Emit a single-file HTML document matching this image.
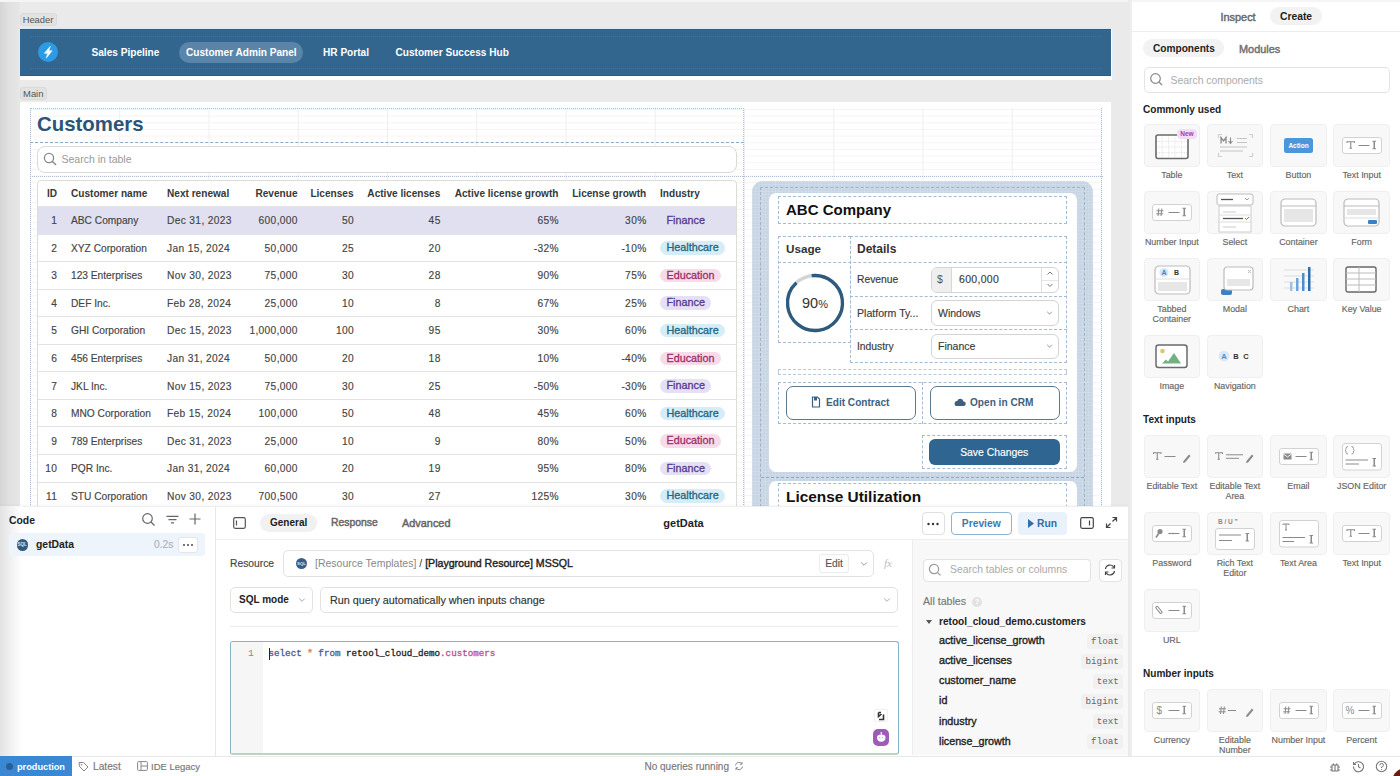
<!DOCTYPE html><html><head><meta charset="utf-8"><title>Retool</title><style>
*{margin:0;padding:0;box-sizing:border-box}
html,body{width:1400px;height:776px;overflow:hidden}
body{position:relative;background:#eaeaea;font-family:"Liberation Sans",sans-serif;color:#222;font-size:10px}
.a{position:absolute}
.b{font-weight:bold}
.t{white-space:nowrap}
.m{-webkit-text-stroke:0.15px currentColor}
</style></head><body>
<div class="a" style="left:0;top:0;width:1132px;height:507px;background:#eaeaea"></div>
<div class="a" style="left:0;top:0;width:20px;height:507px;background:linear-gradient(90deg,#d5d5d5 0,#e0e0e0 8px,#e6e6e6 19px,#e9e9e9 20px)"></div>
<div class="a" style="left:0;top:0;width:1400px;height:1.5px;background:#f5f5f5"></div>
<div class="a t" style="left:19.5px;top:12.5px;width:37px;height:13.5px;background:#e2e2e2;border:1px solid #dadada;border-radius:3px;color:#555;font-size:9.4px;line-height:12px;text-align:center">Header</div>
<div class="a" style="left:19px;top:27px;width:1094px;height:53px;background:#fff;border-top:2px solid #d8ebfa;border-left:1px solid #e0eefa;border-right:1px solid #e0eefa"></div>
<div class="a" style="left:20px;top:29px;width:1091px;height:47px;background:#32668e;border-top:1px solid #2b5c83;border-bottom:1.5px solid #2b5c83"></div>
<div class="a" style="left:30px;top:35.5px;width:1072px;height:33.5px;border-top:1px dotted rgba(120,170,210,0.2);border-bottom:1px dotted rgba(120,170,210,0.2)"></div>
<div class="a" style="left:38px;top:42px;width:20px;height:20px;border-radius:50%;background:#2b9be6"></div>
<svg class="a" style="left:38px;top:42px" width="20" height="20" viewBox="0 0 20 20"><path d="M12.3 4.2 L6.3 11.3 H9.6 L8.2 16.2 L14.2 8.8 H10.9 Z" fill="#f4fbff" stroke="#f4fbff" stroke-width="0.6" stroke-linejoin="round"/></svg>
<div class="a t b" style="left:91.5px;top:42px;height:21px;line-height:21px;color:#fff;font-size:10.1px">Sales Pipeline</div>
<div class="a" style="left:179px;top:42px;width:124px;height:21px;border-radius:11px;background:#5a85a8"></div>
<div class="a t b" style="left:186px;top:42px;height:21px;line-height:21px;color:#fff;font-size:10.1px">Customer Admin Panel</div>
<div class="a t b" style="left:323px;top:42px;height:21px;line-height:21px;color:#fff;font-size:10.1px">HR Portal</div>
<div class="a t b" style="left:395.5px;top:42px;height:21px;line-height:21px;color:#fff;font-size:10.1px">Customer Success Hub</div>
<div class="a t" style="left:19.5px;top:86.5px;width:27.5px;height:13.5px;background:#e2e2e2;border:1px solid #dadada;border-radius:3px;color:#555;font-size:9.4px;line-height:12px;text-align:center">Main</div>
<div class="a" style="left:20px;top:102px;width:1091px;height:405px;background:#fff"></div>
<div class="a" style="left:30px;top:108px;width:1072px;height:399px;background-image:linear-gradient(90deg,#efefef 1px,transparent 1px),linear-gradient(#f4f4f4 1px,transparent 1px);background-size:89.25px 100%,100% 6.66px;background-position:0 0,0 1px"></div>
<div class="a" style="left:30px;top:108px;width:714px;height:399px;border:1px dotted #a9c0d6"></div>
<div class="a" style="left:30px;top:142px;width:714px;height:0;border-top:1px dashed #8fa9c2"></div>
<div class="a" style="left:30px;top:176px;width:1073px;height:0;border-top:1px dotted #a9c0d6"></div>
<div class="a" style="left:1101px;top:108px;width:0;height:399px;border-left:1px dotted #a9c0d6"></div>
<div class="a t b" style="left:37px;top:111px;height:26px;line-height:26px;font-size:20.4px;color:#2c5477">Customers</div>
<div class="a" style="left:37px;top:146px;width:700px;height:27px;border:1px solid #d9d9d9;border-radius:8px;background:#fff"></div>
<svg class="a" style="left:43px;top:152px" width="14" height="14" viewBox="0 0 14 14"><circle cx="6" cy="6" r="4.6" fill="none" stroke="#888" stroke-width="1.3"/><path d="M9.4 9.4 L12.6 12.6" stroke="#888" stroke-width="1.4" stroke-linecap="round"/></svg>
<div class="a t" style="left:61.5px;top:150px;height:18px;line-height:18px;font-size:10.5px;color:#999">Search in table</div>
<div class="a" style="left:37px;top:180px;width:700px;height:340px;border:1px solid #dcdcdc;border-radius:4px;background:#fff;overflow:hidden"></div>
<div class="a t b" style="left:47px;top:185px;height:18px;line-height:18px;font-size:10.1px;color:#383838">ID</div>
<div class="a t b" style="left:71px;top:185px;height:18px;line-height:18px;font-size:10.1px;color:#383838">Customer name</div>
<div class="a t b" style="left:167px;top:185px;height:18px;line-height:18px;font-size:10.1px;color:#383838">Next renewal</div>
<div class="a t b" style="right:1102.5px;top:185px;height:18px;line-height:18px;font-size:10.1px;color:#383838">Revenue</div>
<div class="a t b" style="right:1046.4px;top:185px;height:18px;line-height:18px;font-size:10.1px;color:#383838">Licenses</div>
<div class="a t b" style="right:959.7px;top:185px;height:18px;line-height:18px;font-size:10.1px;color:#383838">Active licenses</div>
<div class="a t b" style="right:841.5px;top:185px;height:18px;line-height:18px;font-size:10.1px;color:#383838">Active license growth</div>
<div class="a t b" style="right:753.8px;top:185px;height:18px;line-height:18px;font-size:10.1px;color:#383838">License growth</div>
<div class="a t b" style="left:660px;top:185px;height:18px;line-height:18px;font-size:10.1px;color:#383838">Industry</div>
<div class="a" style="left:38px;top:206.0px;width:698px;height:27.55px;background:#e0e0f1"></div>
<div class="a" style="left:38px;top:206.0px;width:698px;height:1px;background:#e3e3e3"></div>
<div class="a t m" style="right:1342.65px;top:212.275px;height:18px;line-height:18px;font-size:10.2px;color:#444;letter-spacing:0.35px">1</div>
<div class="a t m" style="left:71px;top:212.275px;height:18px;line-height:18px;font-size:10.2px;color:#444">ABC Company</div>
<div class="a t m" style="left:167px;top:212.275px;height:18px;line-height:18px;font-size:10.2px;color:#444;letter-spacing:0.35px">Dec 31, 2023</div>
<div class="a t m" style="right:1102.15px;top:212.275px;height:18px;line-height:18px;font-size:10.2px;color:#444;letter-spacing:0.35px">600,000</div>
<div class="a t m" style="right:1046.0500000000002px;top:212.275px;height:18px;line-height:18px;font-size:10.2px;color:#444;letter-spacing:0.35px">50</div>
<div class="a t m" style="right:959.35px;top:212.275px;height:18px;line-height:18px;font-size:10.2px;color:#444;letter-spacing:0.35px">45</div>
<div class="a t m" style="right:841.15px;top:212.275px;height:18px;line-height:18px;font-size:10.2px;color:#444;letter-spacing:0.35px">65%</div>
<div class="a t m" style="right:753.4499999999999px;top:212.275px;height:18px;line-height:18px;font-size:10.2px;color:#444;letter-spacing:0.35px">30%</div>
<div class="a t m" style="left:660px;top:213.775px;width:51px;height:13.5px;border-radius:7px;background:transparent;color:#55398f;font-size:10.8px;line-height:13.5px;padding-left:6.5px;-webkit-text-stroke:0.3px #55398f">Finance</div>
<div class="a" style="left:38px;top:233.55px;width:698px;height:1px;background:#e3e3e3"></div>
<div class="a t m" style="right:1342.65px;top:239.82500000000002px;height:18px;line-height:18px;font-size:10.2px;color:#444;letter-spacing:0.35px">2</div>
<div class="a t m" style="left:71px;top:239.82500000000002px;height:18px;line-height:18px;font-size:10.2px;color:#444">XYZ Corporation</div>
<div class="a t m" style="left:167px;top:239.82500000000002px;height:18px;line-height:18px;font-size:10.2px;color:#444;letter-spacing:0.35px">Jan 15, 2024</div>
<div class="a t m" style="right:1102.15px;top:239.82500000000002px;height:18px;line-height:18px;font-size:10.2px;color:#444;letter-spacing:0.35px">50,000</div>
<div class="a t m" style="right:1046.0500000000002px;top:239.82500000000002px;height:18px;line-height:18px;font-size:10.2px;color:#444;letter-spacing:0.35px">25</div>
<div class="a t m" style="right:959.35px;top:239.82500000000002px;height:18px;line-height:18px;font-size:10.2px;color:#444;letter-spacing:0.35px">20</div>
<div class="a t m" style="right:841.15px;top:239.82500000000002px;height:18px;line-height:18px;font-size:10.2px;color:#444;letter-spacing:0.35px">-32%</div>
<div class="a t m" style="right:753.4499999999999px;top:239.82500000000002px;height:18px;line-height:18px;font-size:10.2px;color:#444;letter-spacing:0.35px">-10%</div>
<div class="a t m" style="left:660px;top:241.32500000000002px;width:65px;height:13.5px;border-radius:7px;background:#d6ecf6;color:#1d6684;font-size:10.8px;line-height:13.5px;padding-left:6.5px;-webkit-text-stroke:0.3px #1d6684">Healthcare</div>
<div class="a" style="left:38px;top:261.1px;width:698px;height:1px;background:#e3e3e3"></div>
<div class="a t m" style="right:1342.65px;top:267.375px;height:18px;line-height:18px;font-size:10.2px;color:#444;letter-spacing:0.35px">3</div>
<div class="a t m" style="left:71px;top:267.375px;height:18px;line-height:18px;font-size:10.2px;color:#444">123 Enterprises</div>
<div class="a t m" style="left:167px;top:267.375px;height:18px;line-height:18px;font-size:10.2px;color:#444;letter-spacing:0.35px">Nov 30, 2023</div>
<div class="a t m" style="right:1102.15px;top:267.375px;height:18px;line-height:18px;font-size:10.2px;color:#444;letter-spacing:0.35px">75,000</div>
<div class="a t m" style="right:1046.0500000000002px;top:267.375px;height:18px;line-height:18px;font-size:10.2px;color:#444;letter-spacing:0.35px">30</div>
<div class="a t m" style="right:959.35px;top:267.375px;height:18px;line-height:18px;font-size:10.2px;color:#444;letter-spacing:0.35px">28</div>
<div class="a t m" style="right:841.15px;top:267.375px;height:18px;line-height:18px;font-size:10.2px;color:#444;letter-spacing:0.35px">90%</div>
<div class="a t m" style="right:753.4499999999999px;top:267.375px;height:18px;line-height:18px;font-size:10.2px;color:#444;letter-spacing:0.35px">75%</div>
<div class="a t m" style="left:660px;top:268.875px;width:61px;height:13.5px;border-radius:7px;background:#f7dbe9;color:#9d2f67;font-size:10.8px;line-height:13.5px;padding-left:6.5px;-webkit-text-stroke:0.3px #9d2f67">Education</div>
<div class="a" style="left:38px;top:288.65px;width:698px;height:1px;background:#e3e3e3"></div>
<div class="a t m" style="right:1342.65px;top:294.92499999999995px;height:18px;line-height:18px;font-size:10.2px;color:#444;letter-spacing:0.35px">4</div>
<div class="a t m" style="left:71px;top:294.92499999999995px;height:18px;line-height:18px;font-size:10.2px;color:#444">DEF Inc.</div>
<div class="a t m" style="left:167px;top:294.92499999999995px;height:18px;line-height:18px;font-size:10.2px;color:#444;letter-spacing:0.35px">Feb 28, 2024</div>
<div class="a t m" style="right:1102.15px;top:294.92499999999995px;height:18px;line-height:18px;font-size:10.2px;color:#444;letter-spacing:0.35px">25,000</div>
<div class="a t m" style="right:1046.0500000000002px;top:294.92499999999995px;height:18px;line-height:18px;font-size:10.2px;color:#444;letter-spacing:0.35px">10</div>
<div class="a t m" style="right:959.35px;top:294.92499999999995px;height:18px;line-height:18px;font-size:10.2px;color:#444;letter-spacing:0.35px">8</div>
<div class="a t m" style="right:841.15px;top:294.92499999999995px;height:18px;line-height:18px;font-size:10.2px;color:#444;letter-spacing:0.35px">67%</div>
<div class="a t m" style="right:753.4499999999999px;top:294.92499999999995px;height:18px;line-height:18px;font-size:10.2px;color:#444;letter-spacing:0.35px">25%</div>
<div class="a t m" style="left:660px;top:296.42499999999995px;width:51px;height:13.5px;border-radius:7px;background:#e6e0f4;color:#55398f;font-size:10.8px;line-height:13.5px;padding-left:6.5px;-webkit-text-stroke:0.3px #55398f">Finance</div>
<div class="a" style="left:38px;top:316.2px;width:698px;height:1px;background:#e3e3e3"></div>
<div class="a t m" style="right:1342.65px;top:322.47499999999997px;height:18px;line-height:18px;font-size:10.2px;color:#444;letter-spacing:0.35px">5</div>
<div class="a t m" style="left:71px;top:322.47499999999997px;height:18px;line-height:18px;font-size:10.2px;color:#444">GHI Corporation</div>
<div class="a t m" style="left:167px;top:322.47499999999997px;height:18px;line-height:18px;font-size:10.2px;color:#444;letter-spacing:0.35px">Dec 15, 2023</div>
<div class="a t m" style="right:1102.15px;top:322.47499999999997px;height:18px;line-height:18px;font-size:10.2px;color:#444;letter-spacing:0.35px">1,000,000</div>
<div class="a t m" style="right:1046.0500000000002px;top:322.47499999999997px;height:18px;line-height:18px;font-size:10.2px;color:#444;letter-spacing:0.35px">100</div>
<div class="a t m" style="right:959.35px;top:322.47499999999997px;height:18px;line-height:18px;font-size:10.2px;color:#444;letter-spacing:0.35px">95</div>
<div class="a t m" style="right:841.15px;top:322.47499999999997px;height:18px;line-height:18px;font-size:10.2px;color:#444;letter-spacing:0.35px">30%</div>
<div class="a t m" style="right:753.4499999999999px;top:322.47499999999997px;height:18px;line-height:18px;font-size:10.2px;color:#444;letter-spacing:0.35px">60%</div>
<div class="a t m" style="left:660px;top:323.97499999999997px;width:65px;height:13.5px;border-radius:7px;background:#d6ecf6;color:#1d6684;font-size:10.8px;line-height:13.5px;padding-left:6.5px;-webkit-text-stroke:0.3px #1d6684">Healthcare</div>
<div class="a" style="left:38px;top:343.75px;width:698px;height:1px;background:#e3e3e3"></div>
<div class="a t m" style="right:1342.65px;top:350.025px;height:18px;line-height:18px;font-size:10.2px;color:#444;letter-spacing:0.35px">6</div>
<div class="a t m" style="left:71px;top:350.025px;height:18px;line-height:18px;font-size:10.2px;color:#444">456 Enterprises</div>
<div class="a t m" style="left:167px;top:350.025px;height:18px;line-height:18px;font-size:10.2px;color:#444;letter-spacing:0.35px">Jan 31, 2024</div>
<div class="a t m" style="right:1102.15px;top:350.025px;height:18px;line-height:18px;font-size:10.2px;color:#444;letter-spacing:0.35px">50,000</div>
<div class="a t m" style="right:1046.0500000000002px;top:350.025px;height:18px;line-height:18px;font-size:10.2px;color:#444;letter-spacing:0.35px">20</div>
<div class="a t m" style="right:959.35px;top:350.025px;height:18px;line-height:18px;font-size:10.2px;color:#444;letter-spacing:0.35px">18</div>
<div class="a t m" style="right:841.15px;top:350.025px;height:18px;line-height:18px;font-size:10.2px;color:#444;letter-spacing:0.35px">10%</div>
<div class="a t m" style="right:753.4499999999999px;top:350.025px;height:18px;line-height:18px;font-size:10.2px;color:#444;letter-spacing:0.35px">-40%</div>
<div class="a t m" style="left:660px;top:351.525px;width:61px;height:13.5px;border-radius:7px;background:#f7dbe9;color:#9d2f67;font-size:10.8px;line-height:13.5px;padding-left:6.5px;-webkit-text-stroke:0.3px #9d2f67">Education</div>
<div class="a" style="left:38px;top:371.3px;width:698px;height:1px;background:#e3e3e3"></div>
<div class="a t m" style="right:1342.65px;top:377.575px;height:18px;line-height:18px;font-size:10.2px;color:#444;letter-spacing:0.35px">7</div>
<div class="a t m" style="left:71px;top:377.575px;height:18px;line-height:18px;font-size:10.2px;color:#444">JKL Inc.</div>
<div class="a t m" style="left:167px;top:377.575px;height:18px;line-height:18px;font-size:10.2px;color:#444;letter-spacing:0.35px">Nov 15, 2023</div>
<div class="a t m" style="right:1102.15px;top:377.575px;height:18px;line-height:18px;font-size:10.2px;color:#444;letter-spacing:0.35px">75,000</div>
<div class="a t m" style="right:1046.0500000000002px;top:377.575px;height:18px;line-height:18px;font-size:10.2px;color:#444;letter-spacing:0.35px">30</div>
<div class="a t m" style="right:959.35px;top:377.575px;height:18px;line-height:18px;font-size:10.2px;color:#444;letter-spacing:0.35px">25</div>
<div class="a t m" style="right:841.15px;top:377.575px;height:18px;line-height:18px;font-size:10.2px;color:#444;letter-spacing:0.35px">-50%</div>
<div class="a t m" style="right:753.4499999999999px;top:377.575px;height:18px;line-height:18px;font-size:10.2px;color:#444;letter-spacing:0.35px">-30%</div>
<div class="a t m" style="left:660px;top:379.075px;width:51px;height:13.5px;border-radius:7px;background:#e6e0f4;color:#55398f;font-size:10.8px;line-height:13.5px;padding-left:6.5px;-webkit-text-stroke:0.3px #55398f">Finance</div>
<div class="a" style="left:38px;top:398.85px;width:698px;height:1px;background:#e3e3e3"></div>
<div class="a t m" style="right:1342.65px;top:405.125px;height:18px;line-height:18px;font-size:10.2px;color:#444;letter-spacing:0.35px">8</div>
<div class="a t m" style="left:71px;top:405.125px;height:18px;line-height:18px;font-size:10.2px;color:#444">MNO Corporation</div>
<div class="a t m" style="left:167px;top:405.125px;height:18px;line-height:18px;font-size:10.2px;color:#444;letter-spacing:0.35px">Feb 15, 2024</div>
<div class="a t m" style="right:1102.15px;top:405.125px;height:18px;line-height:18px;font-size:10.2px;color:#444;letter-spacing:0.35px">100,000</div>
<div class="a t m" style="right:1046.0500000000002px;top:405.125px;height:18px;line-height:18px;font-size:10.2px;color:#444;letter-spacing:0.35px">50</div>
<div class="a t m" style="right:959.35px;top:405.125px;height:18px;line-height:18px;font-size:10.2px;color:#444;letter-spacing:0.35px">48</div>
<div class="a t m" style="right:841.15px;top:405.125px;height:18px;line-height:18px;font-size:10.2px;color:#444;letter-spacing:0.35px">45%</div>
<div class="a t m" style="right:753.4499999999999px;top:405.125px;height:18px;line-height:18px;font-size:10.2px;color:#444;letter-spacing:0.35px">60%</div>
<div class="a t m" style="left:660px;top:406.625px;width:65px;height:13.5px;border-radius:7px;background:#d6ecf6;color:#1d6684;font-size:10.8px;line-height:13.5px;padding-left:6.5px;-webkit-text-stroke:0.3px #1d6684">Healthcare</div>
<div class="a" style="left:38px;top:426.4px;width:698px;height:1px;background:#e3e3e3"></div>
<div class="a t m" style="right:1342.65px;top:432.67499999999995px;height:18px;line-height:18px;font-size:10.2px;color:#444;letter-spacing:0.35px">9</div>
<div class="a t m" style="left:71px;top:432.67499999999995px;height:18px;line-height:18px;font-size:10.2px;color:#444">789 Enterprises</div>
<div class="a t m" style="left:167px;top:432.67499999999995px;height:18px;line-height:18px;font-size:10.2px;color:#444;letter-spacing:0.35px">Dec 31, 2023</div>
<div class="a t m" style="right:1102.15px;top:432.67499999999995px;height:18px;line-height:18px;font-size:10.2px;color:#444;letter-spacing:0.35px">25,000</div>
<div class="a t m" style="right:1046.0500000000002px;top:432.67499999999995px;height:18px;line-height:18px;font-size:10.2px;color:#444;letter-spacing:0.35px">10</div>
<div class="a t m" style="right:959.35px;top:432.67499999999995px;height:18px;line-height:18px;font-size:10.2px;color:#444;letter-spacing:0.35px">9</div>
<div class="a t m" style="right:841.15px;top:432.67499999999995px;height:18px;line-height:18px;font-size:10.2px;color:#444;letter-spacing:0.35px">80%</div>
<div class="a t m" style="right:753.4499999999999px;top:432.67499999999995px;height:18px;line-height:18px;font-size:10.2px;color:#444;letter-spacing:0.35px">50%</div>
<div class="a t m" style="left:660px;top:434.17499999999995px;width:61px;height:13.5px;border-radius:7px;background:#f7dbe9;color:#9d2f67;font-size:10.8px;line-height:13.5px;padding-left:6.5px;-webkit-text-stroke:0.3px #9d2f67">Education</div>
<div class="a" style="left:38px;top:453.95000000000005px;width:698px;height:1px;background:#e3e3e3"></div>
<div class="a t m" style="right:1342.65px;top:460.225px;height:18px;line-height:18px;font-size:10.2px;color:#444;letter-spacing:0.35px">10</div>
<div class="a t m" style="left:71px;top:460.225px;height:18px;line-height:18px;font-size:10.2px;color:#444">PQR Inc.</div>
<div class="a t m" style="left:167px;top:460.225px;height:18px;line-height:18px;font-size:10.2px;color:#444;letter-spacing:0.35px">Jan 31, 2024</div>
<div class="a t m" style="right:1102.15px;top:460.225px;height:18px;line-height:18px;font-size:10.2px;color:#444;letter-spacing:0.35px">60,000</div>
<div class="a t m" style="right:1046.0500000000002px;top:460.225px;height:18px;line-height:18px;font-size:10.2px;color:#444;letter-spacing:0.35px">20</div>
<div class="a t m" style="right:959.35px;top:460.225px;height:18px;line-height:18px;font-size:10.2px;color:#444;letter-spacing:0.35px">19</div>
<div class="a t m" style="right:841.15px;top:460.225px;height:18px;line-height:18px;font-size:10.2px;color:#444;letter-spacing:0.35px">95%</div>
<div class="a t m" style="right:753.4499999999999px;top:460.225px;height:18px;line-height:18px;font-size:10.2px;color:#444;letter-spacing:0.35px">80%</div>
<div class="a t m" style="left:660px;top:461.725px;width:51px;height:13.5px;border-radius:7px;background:#e6e0f4;color:#55398f;font-size:10.8px;line-height:13.5px;padding-left:6.5px;-webkit-text-stroke:0.3px #55398f">Finance</div>
<div class="a" style="left:38px;top:481.5px;width:698px;height:1px;background:#e3e3e3"></div>
<div class="a t m" style="right:1342.65px;top:487.775px;height:18px;line-height:18px;font-size:10.2px;color:#444;letter-spacing:0.35px">11</div>
<div class="a t m" style="left:71px;top:487.775px;height:18px;line-height:18px;font-size:10.2px;color:#444">STU Corporation</div>
<div class="a t m" style="left:167px;top:487.775px;height:18px;line-height:18px;font-size:10.2px;color:#444;letter-spacing:0.35px">Nov 30, 2023</div>
<div class="a t m" style="right:1102.15px;top:487.775px;height:18px;line-height:18px;font-size:10.2px;color:#444;letter-spacing:0.35px">700,500</div>
<div class="a t m" style="right:1046.0500000000002px;top:487.775px;height:18px;line-height:18px;font-size:10.2px;color:#444;letter-spacing:0.35px">30</div>
<div class="a t m" style="right:959.35px;top:487.775px;height:18px;line-height:18px;font-size:10.2px;color:#444;letter-spacing:0.35px">27</div>
<div class="a t m" style="right:841.15px;top:487.775px;height:18px;line-height:18px;font-size:10.2px;color:#444;letter-spacing:0.35px">125%</div>
<div class="a t m" style="right:753.4499999999999px;top:487.775px;height:18px;line-height:18px;font-size:10.2px;color:#444;letter-spacing:0.35px">30%</div>
<div class="a t m" style="left:660px;top:489.275px;width:65px;height:13.5px;border-radius:7px;background:#d6ecf6;color:#1d6684;font-size:10.8px;line-height:13.5px;padding-left:6.5px;-webkit-text-stroke:0.3px #1d6684">Healthcare</div>
<div class="a" style="left:752px;top:181px;width:341px;height:340px;border-radius:11px;background:#c6d4e3"></div>
<div class="a" style="left:752px;top:181px;width:341px;height:340px;border-radius:11px;background-image:linear-gradient(90deg,rgba(255,255,255,0.18) 1px,transparent 1px),linear-gradient(rgba(255,255,255,0.18) 1px,transparent 1px);background-size:3.3px 100%,100% 3.3px;pointer-events:none"></div>
<div class="a" style="left:760px;top:187px;width:325px;height:330px;border:1px dashed #9db3c9"></div>
<div class="a" style="left:768.5px;top:193px;width:308.5px;height:279px;border-radius:7px;background:#fff"></div>
<div class="a" style="left:768.5px;top:481px;width:308.5px;height:60px;border-radius:7px;background:#fff"></div>
<div class="a" style="left:761px;top:476.5px;width:323px;border-top:1px dashed #8ea8c2"></div>
<div class="a" style="left:778px;top:196px;width:289px;height:28px;border:1px dashed #a6bbd0"></div>
<div class="a t b" style="left:786px;top:200px;height:20px;line-height:20px;font-size:15px;color:#111">ABC Company</div>
<div class="a" style="left:778px;top:235.5px;width:73px;height:107px;border:1px dashed #a6bbd0"></div>
<div class="a" style="left:850px;top:235.5px;width:217px;height:127px;border:1px dashed #a6bbd0"></div>
<div class="a" style="left:778px;top:262px;width:289px;border-top:1px dashed #a6bbd0"></div>
<div class="a" style="left:850px;top:296px;width:217px;border-top:1px dashed #a6bbd0"></div>
<div class="a" style="left:850px;top:329px;width:217px;border-top:1px dashed #a6bbd0"></div>
<div class="a t b" style="left:786px;top:240px;height:18px;line-height:18px;font-size:11.7px;color:#333">Usage</div>
<div class="a t b" style="left:857px;top:240px;height:18px;line-height:18px;font-size:12px;color:#333">Details</div>
<svg class="a" style="left:784px;top:272px" width="62" height="62" viewBox="0 0 62 62"><circle cx="31" cy="31" r="27.5" fill="none" stroke="#d4d4d4" stroke-width="3.3"/><circle cx="31" cy="31" r="27.5" fill="none" stroke="#2d5b80" stroke-width="3.3" stroke-dasharray="155.5 200" transform="rotate(-97 31 31)"/></svg>
<div class="a t" style="left:799px;top:294px;width:32px;height:18px;line-height:18px;font-size:14.5px;color:#333;text-align:center">90<span style="font-size:11px">%</span></div>
<div class="a t m" style="left:857px;top:271px;height:18px;line-height:18px;font-size:10.3px;color:#3a3a3a">Revenue</div>
<div class="a t m" style="left:857px;top:304px;height:18px;line-height:18px;font-size:10.6px;color:#3a3a3a">Platform Ty...</div>
<div class="a t m" style="left:857px;top:338px;height:18px;line-height:18px;font-size:10.3px;color:#3a3a3a">Industry</div>
<div class="a" style="left:931px;top:266.5px;width:128px;height:26px;border:1px solid #d4d4d4;border-radius:6px;background:#fff;overflow:hidden"><div class="a" style="left:0;top:0;width:20px;height:24px;background:#efefef;border-right:1px solid #d8d8d8"></div><div class="a" style="left:109px;top:0;width:1px;height:24px;background:#e0e0e0"></div><div class="a" style="left:110px;top:12px;width:18px;height:1px;background:#e6e6e6"></div></div>
<div class="a t" style="left:937px;top:270px;height:18px;line-height:18px;font-size:10.5px;color:#555">$</div>
<div class="a t m" style="left:959px;top:270px;height:18px;line-height:18px;font-size:10.5px;color:#3a3a3a;letter-spacing:0.3px">600,000</div>
<svg class="a" style="left:1045px;top:268px" width="10" height="22" viewBox="0 0 10 22"><path d="M2.5 6.5 L5 4 L7.5 6.5" fill="none" stroke="#777" stroke-width="1"/><path d="M2.5 16 L5 18.5 L7.5 16" fill="none" stroke="#777" stroke-width="1"/></svg>
<div class="a" style="left:931px;top:300px;width:128px;height:25.5px;border:1px solid #d4d4d4;border-radius:6px;background:#fff"></div>
<div class="a t m" style="left:938px;top:303.75px;height:18px;line-height:18px;font-size:10.5px;color:#3a3a3a">Windows</div>
<svg class="a" style="left:1046px;top:309.75px" width="7" height="6" viewBox="0 0 7 6"><path d="M1.2 1.8 L3.5 4.1 L5.8 1.8" fill="none" stroke="#888" stroke-width="0.9"/></svg>
<div class="a" style="left:931px;top:333.5px;width:128px;height:25.5px;border:1px solid #d4d4d4;border-radius:6px;background:#fff"></div>
<div class="a t m" style="left:938px;top:337.25px;height:18px;line-height:18px;font-size:10.5px;color:#3a3a3a">Finance</div>
<svg class="a" style="left:1046px;top:343.25px" width="7" height="6" viewBox="0 0 7 6"><path d="M1.2 1.8 L3.5 4.1 L5.8 1.8" fill="none" stroke="#888" stroke-width="0.9"/></svg>
<div class="a" style="left:778px;top:369px;width:289px;height:6px;border:1px dashed #b9c9d9"></div>
<div class="a" style="left:778px;top:382px;width:289px;height:42px;border:1px dashed #a6bbd0"></div>
<div class="a" style="left:922px;top:382px;height:42px;border-left:1px dashed #a6bbd0"></div>
<div class="a" style="left:922px;top:435px;width:145px;height:34px;border:1px dashed #a6bbd0"></div>
<div class="a" style="left:785.5px;top:386px;width:130.5px;height:33.5px;border:1.5px solid #5c7890;border-radius:7px;background:#fff"></div>
<div class="a" style="left:929.5px;top:386px;width:130px;height:33.5px;border:1.5px solid #5c7890;border-radius:7px;background:#fff"></div>
<svg class="a" style="left:811px;top:396px" width="10" height="12" viewBox="0 0 10 12"><path d="M1.5 1 H6.5 L8.5 3 V11 H1.5 Z" fill="none" stroke="#3f607d" stroke-width="1.2"/><path d="M3 1 V4.5 H6 V1" fill="#3f607d"/></svg>
<div class="a t b" style="left:826px;top:394px;height:18px;line-height:18px;font-size:10.1px;color:#3f607d">Edit Contract</div>
<svg class="a" style="left:954px;top:397px" width="12" height="10" viewBox="0 0 12 10"><path d="M3 9 H9.5 A2.3 2.3 0 0 0 9.5 4.4 A3.3 3.3 0 0 0 3.2 4 A2.5 2.5 0 0 0 3 9 Z" fill="#3f607d"/></svg>
<div class="a t b" style="left:970px;top:394px;height:18px;line-height:18px;font-size:10.1px;color:#3f607d">Open in CRM</div>
<div class="a" style="left:929px;top:439px;width:130.5px;height:26px;border-radius:6px;background:#2f6591"></div>
<div class="a t m" style="left:929px;top:444px;width:130.5px;height:18px;line-height:18px;font-size:10.4px;color:#fff;text-align:center">Save Changes</div>
<div class="a" style="left:778px;top:483px;width:289px;height:30px;border:1px dashed #a6bbd0"></div>
<div class="a t b" style="left:786px;top:487px;height:20px;line-height:20px;font-size:15.4px;color:#111">License Utilization</div>
<div class="a" style="left:0;top:505.5px;width:1132px;height:251px;background:#fff;border-top:1px solid #eeeeee;box-shadow:0 -1px 2px rgba(0,0,0,0.04)"></div>
<div class="a" style="left:0;top:506px;width:22px;height:250px;background:linear-gradient(90deg,#e3e3e3,#fff)"></div>
<div class="a" style="left:215px;top:507px;width:1px;height:249px;background:#e8e8e8"></div>
<div class="a t b" style="left:9px;top:511.5px;height:18px;line-height:18px;font-size:10.4px;color:#222">Code</div>
<svg class="a" style="left:141px;top:512px" width="15" height="15" viewBox="0 0 15 15"><circle cx="6.5" cy="6.5" r="4.8" fill="none" stroke="#666" stroke-width="1.2"/><path d="M10 10 L13.5 13.5" stroke="#666" stroke-width="1.3"/></svg>
<svg class="a" style="left:165px;top:513px" width="15" height="13" viewBox="0 0 15 13"><path d="M1.5 3.3 H13.5 M3.5 6.6 H11.5 M6 9.8 H9" stroke="#666" stroke-width="1.2"/></svg>
<svg class="a" style="left:188px;top:512px" width="14" height="14" viewBox="0 0 14 14"><path d="M7 1.5 V12.5 M1.5 7 H12.5" stroke="#666" stroke-width="1.2"/></svg>
<div class="a" style="left:9px;top:533px;width:196px;height:23px;background:#edf4fb;border-radius:3px"></div>
<div class="a" style="left:16.5px;top:539px;width:11.5px;height:11.5px;border-radius:50%;background:#34597a"></div><div class="a t" style="left:16.5px;top:539px;width:11.5px;height:11.5px;line-height:11.5px;font-size:4.5px;color:#dfe8f0;text-align:center;font-weight:bold">SQL</div>
<div class="a t b" style="left:36px;top:536px;height:18px;line-height:18px;font-size:10.4px;color:#222">getData</div>
<div class="a t m" style="left:154px;top:536px;height:18px;line-height:18px;font-size:10.2px;color:#aab2ba">0.2s</div>
<div class="a" style="left:178px;top:537px;width:20px;height:16px;background:#fff;border:1px solid #e6e6e6;border-radius:3px"></div>
<svg class="a" style="left:181px;top:543px" width="14" height="4" viewBox="0 0 14 4"><circle cx="3" cy="2" r="1.1" fill="#555"/><circle cx="7" cy="2" r="1.1" fill="#555"/><circle cx="11" cy="2" r="1.1" fill="#555"/></svg>
<div class="a" style="left:216px;top:539px;width:916px;height:1px;background:#eeeeee"></div>
<svg class="a" style="left:233px;top:517px" width="13" height="12" viewBox="0 0 13 12"><rect x="0.7" y="0.7" width="11.6" height="10.6" rx="1.5" fill="none" stroke="#555" stroke-width="1.2"/><path d="M3.5 3.5 V8.5" stroke="#555" stroke-width="1.2"/></svg>
<div class="a" style="left:260px;top:514px;width:57px;height:18px;border-radius:9px;background:#f1f1f1"></div>
<div class="a t b" style="left:270px;top:514px;height:18px;line-height:18px;font-size:10px;color:#222">General</div>
<div class="a t m" style="left:331px;top:514px;height:18px;line-height:18px;font-size:10.4px;color:#666;-webkit-text-stroke:0.45px #666">Response</div>
<div class="a t m" style="left:402px;top:514px;height:18px;line-height:18px;font-size:10.9px;color:#666;-webkit-text-stroke:0.45px #666">Advanced</div>
<div class="a t b" style="left:616px;top:514px;width:135px;height:18px;line-height:18px;font-size:11px;color:#222;text-align:center">getData</div>
<div class="a" style="left:921.5px;top:512px;width:23px;height:23px;border:1px solid #e0e0e0;border-radius:4px;background:#fff"></div>
<svg class="a" style="left:926px;top:522px" width="14" height="4" viewBox="0 0 14 4"><circle cx="2.5" cy="2" r="1.2" fill="#333"/><circle cx="7" cy="2" r="1.2" fill="#333"/><circle cx="11.5" cy="2" r="1.2" fill="#333"/></svg>
<div class="a" style="left:951px;top:512px;width:60.5px;height:23px;border:1px solid #8fb4d2;border-radius:4px;background:#fff"></div>
<div class="a t b" style="left:951px;top:514.5px;width:60.5px;height:18px;line-height:18px;font-size:10.3px;color:#3b7ab0;text-align:center">Preview</div>
<div class="a" style="left:1018px;top:512px;width:48.5px;height:23px;border-radius:4px;background:#e9f2fa"></div>
<svg class="a" style="left:1027px;top:518px" width="8" height="11" viewBox="0 0 8 11"><path d="M1 1 L7 5.5 L1 10 Z" fill="#2f6ea8"/></svg>
<div class="a t b" style="left:1037px;top:514.5px;height:18px;line-height:18px;font-size:10.3px;color:#2f6ea8">Run</div>
<svg class="a" style="left:1080px;top:517px" width="14" height="12" viewBox="0 0 14 12"><rect x="0.7" y="0.7" width="12.6" height="10.6" rx="1.5" fill="none" stroke="#444" stroke-width="1.2"/><path d="M9.5 3.5 V8.5" stroke="#444" stroke-width="1.2"/></svg>
<svg class="a" style="left:1105px;top:516px" width="13" height="13" viewBox="0 0 13 13"><path d="M7.5 1.5 H11.5 V5.5 M11.5 1.5 L7.5 5.5 M5.5 11.5 H1.5 V7.5 M1.5 11.5 L5.5 7.5" fill="none" stroke="#444" stroke-width="1.2"/></svg>
<div class="a t m" style="left:230px;top:555px;height:18px;line-height:18px;font-size:10.3px;color:#444">Resource</div>
<div class="a" style="left:283px;top:550px;width:591px;height:26.5px;border:1px solid #e2e2e2;border-radius:5px;background:#fff"></div>
<div class="a" style="left:296px;top:558px;width:11px;height:11px;border-radius:50%;background:#36608a"></div><div class="a t" style="left:296px;top:558px;width:11px;height:11px;line-height:11px;font-size:4.3px;color:#dfe8f0;text-align:center;font-weight:bold">SQL</div>
<div class="a t" style="left:315px;top:554px;height:18px;line-height:18px;font-size:10.5px;color:#888">[Resource Templates] <span style="color:#333">/</span> <span class="m" style="color:#222;font-size:10.6px;-webkit-text-stroke:0.4px #222">[Playground Resource] MSSQL</span></div>
<div class="a" style="left:819px;top:554px;width:30px;height:19px;border:1px solid #ececec;border-radius:3px;background:#fff"></div>
<div class="a t m" style="left:819px;top:554.5px;width:30px;height:18px;line-height:18px;font-size:10.3px;color:#555;text-align:center">Edit</div>
<svg class="a" style="left:860px;top:561px" width="8" height="6" viewBox="0 0 8 6"><path d="M1.2 1.5 L4 4.3 L6.8 1.5" fill="none" stroke="#999" stroke-width="1"/></svg>
<div class="a t" style="left:884px;top:554px;height:18px;line-height:18px;font-size:11px;color:#bbb;font-family:'Liberation Serif',serif;font-style:italic">fx</div>
<div class="a" style="left:230px;top:587px;width:83px;height:26px;border:1px solid #e2e2e2;border-radius:5px;background:#fff"></div>
<div class="a t b" style="left:239px;top:591px;height:18px;line-height:18px;font-size:10px;color:#222">SQL mode</div>
<svg class="a" style="left:298px;top:597px" width="8" height="6" viewBox="0 0 8 6"><path d="M1.2 1.5 L4 4.3 L6.8 1.5" fill="none" stroke="#aaa" stroke-width="1"/></svg>
<div class="a" style="left:320px;top:587px;width:578px;height:26px;border:1px solid #e2e2e2;border-radius:5px;background:#fff"></div>
<div class="a t m" style="left:330px;top:591px;height:18px;line-height:18px;font-size:10.8px;color:#333">Run query automatically when inputs change</div>
<svg class="a" style="left:883px;top:597px" width="8" height="6" viewBox="0 0 8 6"><path d="M1.2 1.5 L4 4.3 L6.8 1.5" fill="none" stroke="#aaa" stroke-width="1"/></svg>
<div class="a" style="left:230px;top:625.5px;width:668px;height:1px;background:#ececec"></div>
<div class="a" style="left:229.5px;top:640.5px;width:669px;height:114px;border:1px solid #86b3c8;border-bottom:2px solid #b8d4c4;border-radius:3px;background:#fff;overflow:hidden"><div class="a" style="left:0;top:0;width:32px;height:114px;background:#f6f6f6"></div></div>
<div class="a t" style="left:248px;top:645px;height:18px;line-height:18px;font-size:9.5px;color:#888;font-family:'Liberation Mono',monospace">1</div>
<div class="a t" style="left:268.5px;top:645px;height:18px;line-height:18px;font-size:9.22px;font-family:'Liberation Mono',monospace;color:#222;-webkit-text-stroke:0.3px currentColor"><span style="color:#4b5a99">select</span> <span style="color:#e8875a;font-weight:bold">*</span> <span style="color:#4b5a99">from</span> retool_cloud_demo<span style="color:#c24c8b">.customers</span></div>
<div class="a" style="left:268.5px;top:648px;width:1px;height:12px;background:#222"></div>
<div class="a" style="left:874px;top:709px;width:14px;height:13px;background:#fff;border:1px solid #f0f0f0;border-radius:2px"></div><svg class="a" style="left:876px;top:711px" width="10" height="10" viewBox="0 0 10 10"><path d="M2.5 1.5 H5 M2.5 1.5 V5.5 L5.5 3 M7.5 3.5 V8.5 H3" fill="none" stroke="#333" stroke-width="1.6"/></svg>
<div class="a" style="left:872.5px;top:729px;width:16.5px;height:16.5px;border-radius:5px;background:#9c5cb8"></div>
<svg class="a" style="left:872.5px;top:729px" width="16.5" height="16.5" viewBox="0 0 16.5 16.5"><path d="M8.25 3 V5.5" stroke="#fff" stroke-width="1.2"/><path d="M4 8.5 Q4 5.5 8.25 5.5 Q12.5 5.5 12.5 8.5 Q12.5 12.5 8.25 12.8 Q4 12.5 4 8.5 Z" fill="#fff"/><circle cx="6.8" cy="8.8" r="0.7" fill="#c9a3d9"/><circle cx="9.7" cy="8.8" r="0.7" fill="#c9a3d9"/></svg>
<div class="a" style="left:912px;top:540px;width:220px;height:215px;background:#f8f8f8;border-left:1px solid #ececec"></div>
<div class="a" style="left:922.5px;top:558.5px;width:168px;height:23px;border:1px solid #e2e2e2;border-radius:4px;background:#fff"></div>
<svg class="a" style="left:928px;top:563px" width="14" height="14" viewBox="0 0 14 14"><circle cx="6" cy="6" r="4.6" fill="none" stroke="#999" stroke-width="1.2"/><path d="M9.4 9.4 L12.4 12.4" stroke="#999" stroke-width="1.3"/></svg>
<div class="a t" style="left:950px;top:561px;height:18px;line-height:18px;font-size:10.4px;color:#aaa">Search tables or columns</div>
<div class="a" style="left:1099px;top:558.5px;width:23px;height:23px;border:1px solid #e2e2e2;border-radius:4px;background:#fff"></div>
<svg class="a" style="left:1103px;top:563px" width="14" height="14" viewBox="0 0 14 14"><path d="M2.5 6 A4.5 4.5 0 0 1 11 4.5 M11.5 8 A4.5 4.5 0 0 1 3 9.5" fill="none" stroke="#444" stroke-width="1.2"/><path d="M11.5 2 V5 H8.5 M2.5 12 V9 H5.5" fill="none" stroke="#444" stroke-width="1.2"/></svg>
<div class="a t m" style="left:923px;top:592px;height:18px;line-height:18px;font-size:10.6px;color:#777">All tables</div>
<div class="a" style="left:972px;top:596.5px;width:10px;height:10px;border-radius:50%;background:#e2e2e2;color:#fff;font-size:7.5px;line-height:10px;text-align:center;font-weight:bold">?</div>
<svg class="a" style="left:925px;top:619px" width="8" height="6" viewBox="0 0 8 6"><path d="M1 1 H7 L4 5 Z" fill="#555"/></svg>
<div class="a t b" style="left:939px;top:613px;height:18px;line-height:18px;font-size:10.1px;color:#222">retool_cloud_demo.customers</div>
<div class="a t m" style="left:939px;top:631.1px;height:18px;line-height:18px;font-size:10.75px;color:#222;-webkit-text-stroke:0.35px #222">active_license_growth</div>
<div class="a t" style="left:1087.0px;top:633.6px;width:36.0px;height:15px;line-height:15px;font-size:9.3px;color:#666;font-family:'Liberation Mono',monospace;background:#f1f1f1;border-radius:3px;text-align:center">float</div>
<div class="a t m" style="left:939px;top:651.2px;height:18px;line-height:18px;font-size:10.75px;color:#222;-webkit-text-stroke:0.35px #222">active_licenses</div>
<div class="a t" style="left:1081.4px;top:653.7px;width:41.599999999999994px;height:15px;line-height:15px;font-size:9.3px;color:#666;font-family:'Liberation Mono',monospace;background:#f1f1f1;border-radius:3px;text-align:center">bigint</div>
<div class="a t m" style="left:939px;top:671.3000000000001px;height:18px;line-height:18px;font-size:10.75px;color:#222;-webkit-text-stroke:0.35px #222">customer_name</div>
<div class="a t" style="left:1092.6px;top:673.8000000000001px;width:30.4px;height:15px;line-height:15px;font-size:9.3px;color:#666;font-family:'Liberation Mono',monospace;background:#f1f1f1;border-radius:3px;text-align:center">text</div>
<div class="a t m" style="left:939px;top:691.4px;height:18px;line-height:18px;font-size:10.75px;color:#222;-webkit-text-stroke:0.35px #222">id</div>
<div class="a t" style="left:1081.4px;top:693.9px;width:41.599999999999994px;height:15px;line-height:15px;font-size:9.3px;color:#666;font-family:'Liberation Mono',monospace;background:#f1f1f1;border-radius:3px;text-align:center">bigint</div>
<div class="a t m" style="left:939px;top:711.5px;height:18px;line-height:18px;font-size:10.75px;color:#222;-webkit-text-stroke:0.35px #222">industry</div>
<div class="a t" style="left:1092.6px;top:714.0px;width:30.4px;height:15px;line-height:15px;font-size:9.3px;color:#666;font-family:'Liberation Mono',monospace;background:#f1f1f1;border-radius:3px;text-align:center">text</div>
<div class="a t m" style="left:939px;top:731.6px;height:18px;line-height:18px;font-size:10.75px;color:#222;-webkit-text-stroke:0.35px #222">license_growth</div>
<div class="a t" style="left:1087.0px;top:734.1px;width:36.0px;height:15px;line-height:15px;font-size:9.3px;color:#666;font-family:'Liberation Mono',monospace;background:#f1f1f1;border-radius:3px;text-align:center">float</div>
<div class="a" style="left:1128px;top:0;width:4px;height:756px;background:linear-gradient(90deg,#e9e9e9,#efefef)"></div>
<div class="a" style="left:1132px;top:1.5px;width:268px;height:754.5px;background:#fff"></div>
<div class="a" style="left:1132px;top:31px;width:268px;height:1px;background:#ececec"></div>
<div class="a t m" style="left:1220.5px;top:7.5px;height:18px;line-height:18px;font-size:10.9px;color:#6a6a6a;-webkit-text-stroke:0.45px #6a6a6a">Inspect</div>
<div class="a" style="left:1270px;top:6.5px;width:52px;height:18.5px;border-radius:9px;background:#f2f2f2"></div>
<div class="a t b" style="left:1280px;top:7.5px;height:18px;line-height:18px;font-size:10.3px;color:#222">Create</div>
<div class="a" style="left:1143px;top:38.5px;width:81px;height:18px;border-radius:9px;background:#f2f2f2"></div>
<div class="a t b" style="left:1153px;top:39.5px;height:18px;line-height:18px;font-size:10.15px;color:#222">Components</div>
<div class="a t m" style="left:1239px;top:39.5px;height:18px;line-height:18px;font-size:10.9px;color:#707070;-webkit-text-stroke:0.45px #707070">Modules</div>
<div class="a" style="left:1143.5px;top:67px;width:246px;height:26px;border:1px solid #e4e4e4;border-radius:5px;background:#fff"></div>
<svg class="a" style="left:1149px;top:72px" width="15" height="15" viewBox="0 0 15 15"><circle cx="6.5" cy="6.5" r="4.8" fill="none" stroke="#888" stroke-width="1.2"/><path d="M10 10 L13 13" stroke="#888" stroke-width="1.3"/></svg>
<div class="a t" style="left:1170.5px;top:72px;height:18px;line-height:18px;font-size:10.4px;color:#aaa">Search components</div>
<div class="a t b" style="left:1143px;top:100.8px;height:18px;line-height:18px;font-size:10.05px;color:#222">Commonly used</div>
<div class="a" style="left:1143.6px;top:124px;width:56.5px;height:43px;border-radius:4px;background:#f8f8f8;border:1px solid #efefef"></div>
<svg class="a" style="left:calc(1143.6px + 11px);top:calc(124px + 10px)" width="34" height="26" viewBox="0 0 34 26"><rect x="1" y="1" width="32" height="23.5" rx="2" fill="#fff"/><path d="M1 7.5 H33 M1 13 H33 M1 18.5 H33 M7 1 V24.5 M13.5 1 V24.5 M20 1 V24.5 M26.5 1 V24.5" stroke="#e0e0e0" stroke-width="0.8" stroke-dasharray="1.5 1"/><rect x="1" y="1" width="32" height="23.5" rx="2" fill="none" stroke="#6a6a6a" stroke-width="1.6"/></svg><div class="a" style="left:1177px;top:129px;width:20px;height:10px;border-radius:4px;background:#f4dcf6;color:#9b3fb0;font-size:6.5px;line-height:10px;text-align:center;font-weight:bold">New</div>
<div class="a t m" style="left:1133.6px;top:169px;width:76.5px;height:12px;line-height:12px;font-size:8.9px;color:#666;text-align:center">Table</div>
<div class="a" style="left:1206.6px;top:124px;width:56.5px;height:43px;border-radius:4px;background:#f8f8f8;border:1px solid #efefef"></div>
<svg class="a" style="left:calc(1206.6px + 10px);top:calc(124px + 9px)" width="37" height="26" viewBox="0 0 37 26"><path d="M1.5 5 V1.5 H5 M32 1.5 H35.5 V5 M35.5 20 V23.5 H32 M5 23.5 H1.5 V20" fill="none" stroke="#d0d0d0" stroke-width="1.2"/><path d="M4 10.5 V4.5 L6.5 8 L9 4.5 V10.5" fill="none" stroke="#8a8a8a" stroke-width="1.3"/><path d="M13.5 4.5 V10 M11.5 8 L13.5 10.3 L15.5 8" fill="none" stroke="#8a8a8a" stroke-width="1.1"/><path d="M20 5.5 H30 M20 9.5 H30 M3 14 H30 M3 18 H26" stroke="#c4c4c4" stroke-width="1.1"/></svg>
<div class="a t m" style="left:1196.6px;top:169px;width:76.5px;height:12px;line-height:12px;font-size:8.9px;color:#666;text-align:center">Text</div>
<div class="a" style="left:1270.2px;top:124px;width:56.5px;height:43px;border-radius:4px;background:#f8f8f8;border:1px solid #efefef"></div>
<svg class="a" style="left:calc(1270.2px + 14px);top:calc(124px + 14px)" width="30" height="15" viewBox="0 0 30 15"><rect x="0" y="0" width="29" height="15" rx="2.5" fill="#4a97dc"/><text x="14.5" y="10" font-size="6.5" text-anchor="middle" font-family="Liberation Sans" font-weight="bold" fill="#fff">Action</text></svg>
<div class="a t m" style="left:1260.2px;top:169px;width:76.5px;height:12px;line-height:12px;font-size:8.9px;color:#666;text-align:center">Button</div>
<div class="a" style="left:1333.4px;top:124px;width:56.5px;height:43px;border-radius:4px;background:#f8f8f8;border:1px solid #efefef"></div>
<svg class="a" style="left:calc(1333.4px + 8.3px);top:calc(124px + 13.2px)" width="40" height="17" viewBox="0 0 40 17"><rect x="0.5" y="0.5" width="39" height="16" rx="2.5" fill="#fff" stroke="#d2d2d2" stroke-width="1"/><path d="M5 6 V4.8 H12.5 V6 M8.75 4.8 V11.3 M7.5 11.3 H10" fill="none" stroke="#8a8a8a" stroke-width="1.1"/><path d="M16.5 8.5 H27.5" stroke="#8a8a8a" stroke-width="1"/><path d="M30.5 4.3 H34 M30.5 11.8 H34" stroke="#8a8a8a" stroke-width="1.1"/><path d="M32.25 4.3 V11.8" stroke="#8a8a8a" stroke-width="1.5"/></svg>
<div class="a t m" style="left:1323.4px;top:169px;width:76.5px;height:12px;line-height:12px;font-size:8.9px;color:#666;text-align:center">Text Input</div>
<div class="a" style="left:1143.6px;top:191px;width:56.5px;height:43px;border-radius:4px;background:#f8f8f8;border:1px solid #efefef"></div>
<svg class="a" style="left:calc(1143.6px + 8.3px);top:calc(191px + 13.2px)" width="40" height="17" viewBox="0 0 40 17"><rect x="0.5" y="0.5" width="39" height="16" rx="2.5" fill="#fff" stroke="#d2d2d2" stroke-width="1"/><path d="M6.8 4.5 L6.0 12 M9.8 4.5 L9.0 12 M4.5 6.8 H11.5 M4.2 9.8 H11.2" fill="none" stroke="#8a8a8a" stroke-width="1"/><path d="M16.5 8.5 H27.5" stroke="#8a8a8a" stroke-width="1"/><path d="M30.5 4.3 H34 M30.5 11.8 H34" stroke="#8a8a8a" stroke-width="1.1"/><path d="M32.25 4.3 V11.8" stroke="#8a8a8a" stroke-width="1.5"/></svg>
<div class="a t m" style="left:1133.6px;top:236px;width:76.5px;height:12px;line-height:12px;font-size:8.9px;color:#666;text-align:center">Number Input</div>
<div class="a" style="left:1206.6px;top:191px;width:56.5px;height:43px;border-radius:4px;background:#f8f8f8;border:1px solid #efefef"></div>
<svg class="a" style="left:calc(1206.6px + 9px);top:calc(191px + 2px)" width="38" height="40" viewBox="0 0 38 40"><rect x="1" y="1" width="36" height="11" rx="2" fill="#fff" stroke="#bbb"/><path d="M5 6.5 H17" stroke="#555" stroke-width="1.3"/><path d="M29 5 L31 7 L33 5" fill="none" stroke="#999"/><rect x="3" y="13" width="32" height="26" fill="#fff" stroke="#ccc"/><path d="M7 19 H20" stroke="#ccc"/><path d="M7 25.5 H27" stroke="#555" stroke-width="1.3"/><path d="M29 25 L30.5 26.5 L33 24" fill="none" stroke="#3b82c4" stroke-width="1"/><path d="M3 22 H35 M3 29 H35" stroke="#ddd"/><path d="M7 34 H20" stroke="#ccc"/></svg>
<div class="a t m" style="left:1196.6px;top:236px;width:76.5px;height:12px;line-height:12px;font-size:8.9px;color:#666;text-align:center">Select</div>
<div class="a" style="left:1270.2px;top:191px;width:56.5px;height:43px;border-radius:4px;background:#f8f8f8;border:1px solid #efefef"></div>
<svg class="a" style="left:calc(1270.2px + 10px);top:calc(191px + 7px)" width="37" height="29" viewBox="0 0 37 29"><rect x="1" y="1" width="35" height="27" rx="4" fill="#fff" stroke="#bbb" stroke-width="1.2"/><path d="M1 8 H36" stroke="#bbb"/><rect x="4" y="11" width="29" height="13" fill="#e6e6e6"/></svg>
<div class="a t m" style="left:1260.2px;top:236px;width:76.5px;height:12px;line-height:12px;font-size:8.9px;color:#666;text-align:center">Container</div>
<div class="a" style="left:1333.4px;top:191px;width:56.5px;height:43px;border-radius:4px;background:#f8f8f8;border:1px solid #efefef"></div>
<svg class="a" style="left:calc(1333.4px + 10px);top:calc(191px + 7px)" width="37" height="29" viewBox="0 0 37 29"><rect x="1" y="1" width="35" height="27" rx="4" fill="#fff" stroke="#bbb" stroke-width="1.2"/><path d="M1 8 H36" stroke="#bbb"/><rect x="4" y="11" width="29" height="6" fill="#e6e6e6"/><path d="M1 20 H36" stroke="#ddd"/><rect x="25" y="22" width="9" height="4" rx="1" fill="#3b82c4"/></svg>
<div class="a t m" style="left:1323.4px;top:236px;width:76.5px;height:12px;line-height:12px;font-size:8.9px;color:#666;text-align:center">Form</div>
<div class="a" style="left:1143.6px;top:258px;width:56.5px;height:43px;border-radius:4px;background:#f8f8f8;border:1px solid #efefef"></div>
<svg class="a" style="left:calc(1143.6px + 10px);top:calc(258px + 7px)" width="37" height="30" viewBox="0 0 37 30"><rect x="1" y="1" width="35" height="28" rx="4" fill="#fff" stroke="#bbb" stroke-width="1.2"/><circle cx="10" cy="7.5" r="4.5" fill="#d6e6f6"/><text x="10" y="10" font-size="7" text-anchor="middle" font-family="Liberation Sans" font-weight="bold" fill="#3b82c4">A</text><text x="20" y="10" font-size="7" font-family="Liberation Sans" font-weight="bold" fill="#333">B</text><path d="M1 14 H36" stroke="#ddd"/><rect x="4" y="17" width="29" height="9" fill="#e6e6e6"/></svg>
<div class="a t m" style="left:1133.6px;top:303px;width:76.5px;height:12px;line-height:12px;font-size:8.9px;color:#666;text-align:center">Tabbed</div>
<div class="a t m" style="left:1133.6px;top:313px;width:76.5px;height:12px;line-height:12px;font-size:8.9px;color:#666;text-align:center">Container</div>
<div class="a" style="left:1206.6px;top:258px;width:56.5px;height:43px;border-radius:4px;background:#f8f8f8;border:1px solid #efefef"></div>
<svg class="a" style="left:calc(1206.6px + 10px);top:calc(258px + 8px)" width="38" height="30" viewBox="0 0 38 30"><rect x="4" y="23" width="11" height="6" rx="2" fill="#3b82c4"/><rect x="7" y="1" width="29" height="23" rx="3" fill="#fff" stroke="#bbb" stroke-width="1.2"/><path d="M31 4 L34 7 M34 4 L31 7" stroke="#bbb"/><rect x="10" y="13" width="23" height="7" fill="#e6e6e6"/></svg>
<div class="a t m" style="left:1196.6px;top:303px;width:76.5px;height:12px;line-height:12px;font-size:8.9px;color:#666;text-align:center">Modal</div>
<div class="a" style="left:1270.2px;top:258px;width:56.5px;height:43px;border-radius:4px;background:#f8f8f8;border:1px solid #efefef"></div>
<svg class="a" style="left:calc(1270.2px + 12px);top:calc(258px + 6px)" width="34" height="30" viewBox="0 0 34 30"><path d="M2 6 H32 M2 12 H32 M2 18 H32 M2 24 H32" stroke="#ddd"/><rect x="8" y="18" width="2.5" height="9" fill="#9dc4e6"/><rect x="14" y="14" width="2.5" height="13" fill="#6aa6db"/><rect x="20" y="9" width="2.5" height="18" fill="#4a8ed0"/><rect x="26" y="3" width="2.5" height="24" fill="#2f6ea8"/></svg>
<div class="a t m" style="left:1260.2px;top:303px;width:76.5px;height:12px;line-height:12px;font-size:8.9px;color:#666;text-align:center">Chart</div>
<div class="a" style="left:1333.4px;top:258px;width:56.5px;height:43px;border-radius:4px;background:#f8f8f8;border:1px solid #efefef"></div>
<svg class="a" style="left:calc(1333.4px + 12px);top:calc(258px + 8px)" width="32" height="27" viewBox="0 0 32 27"><rect x="1" y="1" width="30" height="25" rx="2" fill="#fff" stroke="#666" stroke-width="1.4"/><path d="M1 7 H31 M1 13 H31 M1 19 H31 M14 1 V26" stroke="#bbb"/></svg>
<div class="a t m" style="left:1323.4px;top:303px;width:76.5px;height:12px;line-height:12px;font-size:8.9px;color:#666;text-align:center">Key Value</div>
<div class="a" style="left:1143.6px;top:335px;width:56.5px;height:43px;border-radius:4px;background:#f8f8f8;border:1px solid #efefef"></div>
<svg class="a" style="left:calc(1143.6px + 11px);top:calc(335px + 9px)" width="33" height="25" viewBox="0 0 33 25"><rect x="1" y="1" width="31" height="22.5" rx="2.5" fill="#fff" stroke="#6a6a6a" stroke-width="1.5"/><circle cx="7.5" cy="7" r="2.3" fill="#e0c27a"/><path d="M7 19.5 L11 15.5 L13 17.5 L19 9 L26 19.5 Z" fill="#72b184"/></svg>
<div class="a t m" style="left:1133.6px;top:380px;width:76.5px;height:12px;line-height:12px;font-size:8.9px;color:#666;text-align:center">Image</div>
<div class="a" style="left:1206.6px;top:335px;width:56.5px;height:43px;border-radius:4px;background:#f8f8f8;border:1px solid #efefef"></div>
<svg class="a" style="left:calc(1206.6px + 10px);top:calc(335px + 13px)" width="38" height="16" viewBox="0 0 38 16"><circle cx="7" cy="8" r="5.3" fill="#d9e8f7"/><text x="7" y="10.6" font-size="7.5" text-anchor="middle" font-family="Liberation Sans" font-weight="bold" fill="#4a8fd0">A</text><text x="19" y="10.6" font-size="7.5" text-anchor="middle" font-family="Liberation Sans" font-weight="bold" fill="#333">B</text><text x="29" y="10.6" font-size="7.5" text-anchor="middle" font-family="Liberation Sans" font-weight="bold" fill="#333">C</text></svg>
<div class="a t m" style="left:1196.6px;top:380px;width:76.5px;height:12px;line-height:12px;font-size:8.9px;color:#666;text-align:center">Navigation</div>
<div class="a t b" style="left:1143px;top:410.8px;height:18px;line-height:18px;font-size:10.05px;color:#222">Text inputs</div>
<div class="a" style="left:1143.6px;top:435px;width:56.5px;height:43px;border-radius:4px;background:#f8f8f8;border:1px solid #efefef"></div>
<svg class="a" style="left:calc(1143.6px + 8.3px);top:calc(435px + 13.2px)" width="40" height="17" viewBox="0 0 40 17"><path d="M1.5 6 V4.8 H9.0 V6 M5.25 4.8 V11.3 M4.0 11.3 H6.5" fill="none" stroke="#8a8a8a" stroke-width="1.1"/><path d="M12.5 8.5 H23.5" stroke="#8a8a8a" stroke-width="1"/><path d="M31.5 13 L37 6.5 L38.5 8 L33 14.5 L31 15 Z" fill="#8a8a8a"/></svg>
<div class="a t m" style="left:1133.6px;top:480px;width:76.5px;height:12px;line-height:12px;font-size:8.9px;color:#666;text-align:center">Editable Text</div>
<div class="a" style="left:1206.6px;top:435px;width:56.5px;height:43px;border-radius:4px;background:#f8f8f8;border:1px solid #efefef"></div>
<svg class="a" style="left:calc(1206.6px + 8.3px);top:calc(435px + 13.2px)" width="40" height="17" viewBox="0 0 40 17"><path d="M0 6 V4.8 H7.5 V6 M3.75 4.8 V11.3 M2.5 11.3 H5" fill="none" stroke="#8a8a8a" stroke-width="1.1"/><path d="M11 6.8 H28 M11 10.3 H24" stroke="#8a8a8a" stroke-width="1"/><path d="M31.5 13 L37 6.5 L38.5 8 L33 14.5 L31 15 Z" fill="#8a8a8a"/></svg>
<div class="a t m" style="left:1196.6px;top:480px;width:76.5px;height:12px;line-height:12px;font-size:8.9px;color:#666;text-align:center">Editable Text</div>
<div class="a t m" style="left:1196.6px;top:490px;width:76.5px;height:12px;line-height:12px;font-size:8.9px;color:#666;text-align:center">Area</div>
<div class="a" style="left:1270.2px;top:435px;width:56.5px;height:43px;border-radius:4px;background:#f8f8f8;border:1px solid #efefef"></div>
<svg class="a" style="left:calc(1270.2px + 8.3px);top:calc(435px + 13.2px)" width="40" height="17" viewBox="0 0 40 17"><rect x="0.5" y="0.5" width="39" height="16" rx="2.5" fill="#fff" stroke="#d2d2d2" stroke-width="1"/><path d="M4.5 5.5 H12.5 V11.5 H4.5 Z" fill="#8a8a8a"/><path d="M4.5 6 L8.5 9 L12.5 6" fill="none" stroke="#fff" stroke-width="0.9"/><path d="M16.5 8.5 H27.5" stroke="#8a8a8a" stroke-width="1"/><path d="M30.5 4.3 H34 M30.5 11.8 H34" stroke="#8a8a8a" stroke-width="1.1"/><path d="M32.25 4.3 V11.8" stroke="#8a8a8a" stroke-width="1.5"/></svg>
<div class="a t m" style="left:1260.2px;top:480px;width:76.5px;height:12px;line-height:12px;font-size:8.9px;color:#666;text-align:center">Email</div>
<div class="a" style="left:1333.4px;top:435px;width:56.5px;height:43px;border-radius:4px;background:#f8f8f8;border:1px solid #efefef"></div>
<svg class="a" style="left:calc(1333.4px + 8.3px);top:calc(435px + 7.7px)" width="40" height="28" viewBox="0 0 40 28"><rect x="0.5" y="0.5" width="39" height="26.5" rx="2.5" fill="#fff" stroke="#d2d2d2"/><path d="M6 3.5 Q4 3.5 4 5.5 V6.5 L3.2 7.3 L4 8 V9.5 Q4 11 6 11 M9.5 3.5 Q11.5 3.5 11.5 5.5 V6.5 L12.3 7.3 L11.5 8 V9.5 Q11.5 11 9.5 11" fill="none" stroke="#8a8a8a" stroke-width="0.9"/><path d="M3.5 17 H26 M3.5 21 H17" stroke="#8a8a8a" stroke-width="1"/><path d="M30.5 15.5 H34 M30.5 23 H34" stroke="#8a8a8a" stroke-width="1.1"/><path d="M32.25 15.5 V23" stroke="#8a8a8a" stroke-width="1.5"/></svg>
<div class="a t m" style="left:1323.4px;top:480px;width:76.5px;height:12px;line-height:12px;font-size:8.9px;color:#666;text-align:center">JSON Editor</div>
<div class="a" style="left:1143.6px;top:512px;width:56.5px;height:43px;border-radius:4px;background:#f8f8f8;border:1px solid #efefef"></div>
<svg class="a" style="left:calc(1143.6px + 8.3px);top:calc(512px + 13.2px)" width="40" height="17" viewBox="0 0 40 17"><rect x="0.5" y="0.5" width="39" height="16" rx="2.5" fill="#fff" stroke="#d2d2d2" stroke-width="1"/><circle cx="8" cy="6.5" r="2.6" fill="#8a8a8a"/><path d="M7 8 L4 12.5" stroke="#8a8a8a" stroke-width="1.6"/><circle cx="17.5" cy="8.5" r="0.9" fill="#bbb"/><circle cx="21" cy="8.5" r="0.9" fill="#bbb"/><path d="M16.5 8.5 H27.5" stroke="#8a8a8a" stroke-width="1"/><path d="M30.5 4.3 H34 M30.5 11.8 H34" stroke="#8a8a8a" stroke-width="1.1"/><path d="M32.25 4.3 V11.8" stroke="#8a8a8a" stroke-width="1.5"/></svg>
<div class="a t m" style="left:1133.6px;top:557px;width:76.5px;height:12px;line-height:12px;font-size:8.9px;color:#666;text-align:center">Password</div>
<div class="a" style="left:1206.6px;top:512px;width:56.5px;height:43px;border-radius:4px;background:#f8f8f8;border:1px solid #efefef"></div>
<svg class="a" style="left:calc(1206.6px + 8.3px);top:calc(512px + 4px)" width="40" height="36" viewBox="0 0 40 36"><text x="3" y="8" font-size="6.5" font-family="Liberation Sans" font-weight="bold" fill="#8a8a8a">B / U ”</text><rect x="0.5" y="12.5" width="39" height="21" rx="2.5" fill="#fff" stroke="#d2d2d2"/><path d="M4 19 H26 M4 24.5 H17" stroke="#8a8a8a" stroke-width="1"/><path d="M30.5 17.5 H34 M30.5 25 H34" stroke="#8a8a8a" stroke-width="1.1"/><path d="M32.25 17.5 V25" stroke="#8a8a8a" stroke-width="1.5"/></svg>
<div class="a t m" style="left:1196.6px;top:557px;width:76.5px;height:12px;line-height:12px;font-size:8.9px;color:#666;text-align:center">Rich Text</div>
<div class="a t m" style="left:1196.6px;top:567px;width:76.5px;height:12px;line-height:12px;font-size:8.9px;color:#666;text-align:center">Editor</div>
<div class="a" style="left:1270.2px;top:512px;width:56.5px;height:43px;border-radius:4px;background:#f8f8f8;border:1px solid #efefef"></div>
<svg class="a" style="left:calc(1270.2px + 8.3px);top:calc(512px + 7.7px)" width="40" height="28" viewBox="0 0 40 28"><rect x="0.5" y="0.5" width="39" height="26.5" rx="2.5" fill="#fff" stroke="#d2d2d2"/><path d="M4 5 V4 H10 V5 M7 4 V10 M6 10 H8" fill="none" stroke="#8a8a8a" stroke-width="1"/><path d="M3.5 17.5 H26 M3.5 21.5 H15" stroke="#8a8a8a" stroke-width="1"/><path d="M30.5 15.5 H34 M30.5 23 H34" stroke="#8a8a8a" stroke-width="1.1"/><path d="M32.25 15.5 V23" stroke="#8a8a8a" stroke-width="1.5"/></svg>
<div class="a t m" style="left:1260.2px;top:557px;width:76.5px;height:12px;line-height:12px;font-size:8.9px;color:#666;text-align:center">Text Area</div>
<div class="a" style="left:1333.4px;top:512px;width:56.5px;height:43px;border-radius:4px;background:#f8f8f8;border:1px solid #efefef"></div>
<svg class="a" style="left:calc(1333.4px + 8.3px);top:calc(512px + 13.2px)" width="40" height="17" viewBox="0 0 40 17"><rect x="0.5" y="0.5" width="39" height="16" rx="2.5" fill="#fff" stroke="#d2d2d2" stroke-width="1"/><path d="M5 6 V4.8 H12.5 V6 M8.75 4.8 V11.3 M7.5 11.3 H10" fill="none" stroke="#8a8a8a" stroke-width="1.1"/><path d="M16.5 8.5 H27.5" stroke="#8a8a8a" stroke-width="1"/><path d="M30.5 4.3 H34 M30.5 11.8 H34" stroke="#8a8a8a" stroke-width="1.1"/><path d="M32.25 4.3 V11.8" stroke="#8a8a8a" stroke-width="1.5"/></svg>
<div class="a t m" style="left:1323.4px;top:557px;width:76.5px;height:12px;line-height:12px;font-size:8.9px;color:#666;text-align:center">Text Input</div>
<div class="a" style="left:1143.6px;top:589px;width:56.5px;height:43px;border-radius:4px;background:#f8f8f8;border:1px solid #efefef"></div>
<svg class="a" style="left:calc(1143.6px + 8.3px);top:calc(589px + 13.2px)" width="40" height="17" viewBox="0 0 40 17"><rect x="0.5" y="0.5" width="39" height="16" rx="2.5" fill="#fff" stroke="#d2d2d2" stroke-width="1"/><path d="M5 5.5 L8.8 10.2" stroke="#8a8a8a" stroke-width="3.4" stroke-linecap="round"/><path d="M5 5.5 L8.8 10.2" stroke="#fff" stroke-width="1.3" stroke-linecap="round"/><path d="M16.5 8.5 H27.5" stroke="#8a8a8a" stroke-width="1"/><path d="M30.5 4.3 H34 M30.5 11.8 H34" stroke="#8a8a8a" stroke-width="1.1"/><path d="M32.25 4.3 V11.8" stroke="#8a8a8a" stroke-width="1.5"/></svg>
<div class="a t m" style="left:1133.6px;top:634px;width:76.5px;height:12px;line-height:12px;font-size:8.9px;color:#666;text-align:center">URL</div>
<div class="a t b" style="left:1143px;top:664.8px;height:18px;line-height:18px;font-size:10.05px;color:#222">Number inputs</div>
<div class="a" style="left:1143.6px;top:689px;width:56.5px;height:43px;border-radius:4px;background:#f8f8f8;border:1px solid #efefef"></div>
<svg class="a" style="left:calc(1143.6px + 8.3px);top:calc(689px + 13.2px)" width="40" height="17" viewBox="0 0 40 17"><rect x="0.5" y="0.5" width="39" height="16" rx="2.5" fill="#fff" stroke="#d2d2d2" stroke-width="1"/><text x="4.5" y="12.3" font-size="10" font-family="Liberation Sans" fill="#8a8a8a">$</text><path d="M16.5 8.5 H27.5" stroke="#8a8a8a" stroke-width="1"/><path d="M30.5 4.3 H34 M30.5 11.8 H34" stroke="#8a8a8a" stroke-width="1.1"/><path d="M32.25 4.3 V11.8" stroke="#8a8a8a" stroke-width="1.5"/></svg>
<div class="a t m" style="left:1133.6px;top:734px;width:76.5px;height:12px;line-height:12px;font-size:8.9px;color:#666;text-align:center">Currency</div>
<div class="a" style="left:1206.6px;top:689px;width:56.5px;height:43px;border-radius:4px;background:#f8f8f8;border:1px solid #efefef"></div>
<svg class="a" style="left:calc(1206.6px + 8.3px);top:calc(689px + 13.2px)" width="40" height="17" viewBox="0 0 40 17"><path d="M6.3 4.5 L5.5 12 M9.3 4.5 L8.5 12 M4 6.8 H11 M3.7 9.8 H10.7" fill="none" stroke="#8a8a8a" stroke-width="1"/><path d="M13 8.5 H21" stroke="#8a8a8a" stroke-width="1"/><path d="M31.5 13 L37 6.5 L38.5 8 L33 14.5 L31 15 Z" fill="#8a8a8a"/></svg>
<div class="a t m" style="left:1196.6px;top:734px;width:76.5px;height:12px;line-height:12px;font-size:8.9px;color:#666;text-align:center">Editable</div>
<div class="a t m" style="left:1196.6px;top:744px;width:76.5px;height:12px;line-height:12px;font-size:8.9px;color:#666;text-align:center">Number</div>
<div class="a" style="left:1270.2px;top:689px;width:56.5px;height:43px;border-radius:4px;background:#f8f8f8;border:1px solid #efefef"></div>
<svg class="a" style="left:calc(1270.2px + 8.3px);top:calc(689px + 13.2px)" width="40" height="17" viewBox="0 0 40 17"><rect x="0.5" y="0.5" width="39" height="16" rx="2.5" fill="#fff" stroke="#d2d2d2" stroke-width="1"/><path d="M6.8 4.5 L6.0 12 M9.8 4.5 L9.0 12 M4.5 6.8 H11.5 M4.2 9.8 H11.2" fill="none" stroke="#8a8a8a" stroke-width="1"/><path d="M16.5 8.5 H27.5" stroke="#8a8a8a" stroke-width="1"/><path d="M30.5 4.3 H34 M30.5 11.8 H34" stroke="#8a8a8a" stroke-width="1.1"/><path d="M32.25 4.3 V11.8" stroke="#8a8a8a" stroke-width="1.5"/></svg>
<div class="a t m" style="left:1260.2px;top:734px;width:76.5px;height:12px;line-height:12px;font-size:8.9px;color:#666;text-align:center">Number Input</div>
<div class="a" style="left:1333.4px;top:689px;width:56.5px;height:43px;border-radius:4px;background:#f8f8f8;border:1px solid #efefef"></div>
<svg class="a" style="left:calc(1333.4px + 8.3px);top:calc(689px + 13.2px)" width="40" height="17" viewBox="0 0 40 17"><rect x="0.5" y="0.5" width="39" height="16" rx="2.5" fill="#fff" stroke="#d2d2d2" stroke-width="1"/><text x="3.5" y="12.3" font-size="10" font-family="Liberation Sans" fill="#8a8a8a">%</text><path d="M16.5 8.5 H27.5" stroke="#8a8a8a" stroke-width="1"/><path d="M30.5 4.3 H34 M30.5 11.8 H34" stroke="#8a8a8a" stroke-width="1.1"/><path d="M32.25 4.3 V11.8" stroke="#8a8a8a" stroke-width="1.5"/></svg>
<div class="a t m" style="left:1323.4px;top:734px;width:76.5px;height:12px;line-height:12px;font-size:8.9px;color:#666;text-align:center">Percent</div>
<div class="a" style="left:0;top:756px;width:1400px;height:20px;background:#fff;border-top:1px solid #e8e8e8"></div>
<div class="a" style="left:0;top:756px;width:72px;height:20px;background:#3a87d4"></div>
<div class="a" style="left:6px;top:763px;width:7px;height:7px;border-radius:50%;background:#2a5f96"></div>
<div class="a t b" style="left:17px;top:757.5px;height:18px;line-height:18px;font-size:9.2px;color:#fff">production</div>
<svg class="a" style="left:78px;top:761px" width="11" height="11" viewBox="0 0 11 11"><path d="M1 1.5 H5.5 L10 6 L6 10 L1.5 5.5 Z" fill="none" stroke="#888" stroke-width="1"/><circle cx="3.5" cy="3.8" r="0.8" fill="#888"/></svg>
<div class="a t m" style="left:93px;top:758px;height:18px;line-height:18px;font-size:10.2px;color:#777">Latest</div>
<svg class="a" style="left:137px;top:761px" width="11" height="10" viewBox="0 0 11 10"><rect x="0.6" y="0.6" width="9.8" height="8.8" rx="1" fill="none" stroke="#888" stroke-width="1"/><path d="M4 0.6 V9.4 M4 5 H10.4" stroke="#888" stroke-width="1"/></svg>
<div class="a t m" style="left:151px;top:757.5px;height:18px;line-height:18px;font-size:9.5px;color:#777">IDE Legacy</div>
<div class="a t m" style="left:644.5px;top:757.5px;height:18px;line-height:18px;font-size:10px;color:#777">No queries running</div>
<svg class="a" style="left:734px;top:761px" width="10" height="10" viewBox="0 0 10 10"><path d="M1.5 4.5 A3.5 3.5 0 0 1 8 3 M8.5 5.5 A3.5 3.5 0 0 1 2 7" fill="none" stroke="#888" stroke-width="1"/><path d="M8 1 V3.2 H5.8 M2 9 V6.8 H4.2" fill="none" stroke="#888" stroke-width="1"/></svg>
<svg class="a" style="left:1329px;top:761px" width="12" height="12" viewBox="0 0 12 12"><path d="M3 4 H9 V10 H3 Z M6 4 V10 M4 2.5 L5 4 M8 2.5 L7 4 M1 6 H3 M9 6 H11 M1 9 H3 M9 9 H11" fill="none" stroke="#777" stroke-width="1.1"/></svg>
<svg class="a" style="left:1352px;top:760px" width="13" height="13" viewBox="0 0 13 13"><path d="M2.2 4.2 A5 5 0 1 1 1.5 6.5" fill="none" stroke="#777" stroke-width="1.1"/><path d="M1.5 2 V4.5 H4" fill="none" stroke="#777" stroke-width="1.1"/><path d="M6.5 4 V6.8 L8.5 8" fill="none" stroke="#777" stroke-width="1.1"/></svg>
<svg class="a" style="left:1375px;top:760px" width="13" height="13" viewBox="0 0 13 13"><circle cx="6.5" cy="6.5" r="5.2" fill="none" stroke="#777" stroke-width="1.1"/><path d="M4.8 5.2 A1.8 1.8 0 1 1 6.5 7 V8" fill="none" stroke="#777" stroke-width="1"/><circle cx="6.5" cy="9.6" r="0.6" fill="#777"/></svg>
<div class="a" style="left:1392px;top:768px;width:28px;height:28px;border-radius:50%;background:#6e1a12"></div>
</body></html>
